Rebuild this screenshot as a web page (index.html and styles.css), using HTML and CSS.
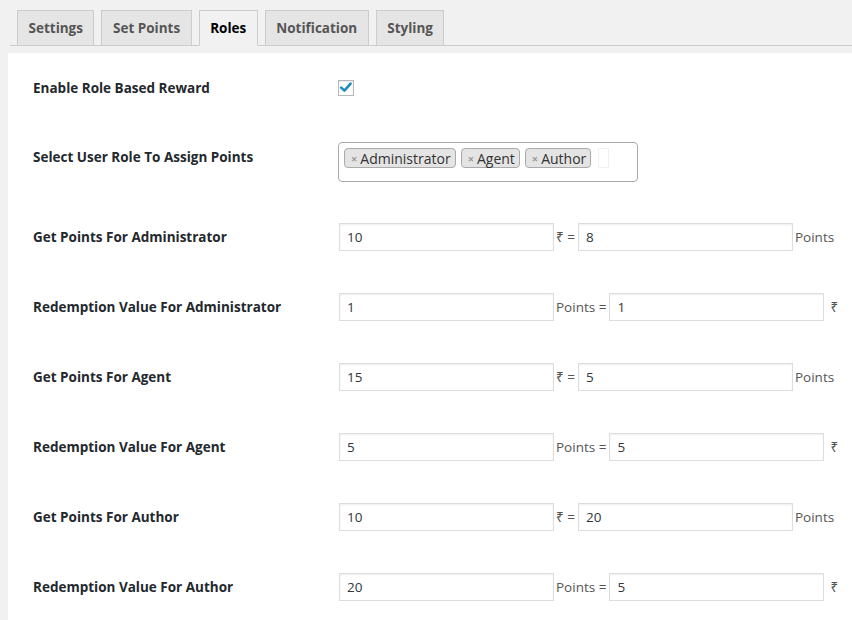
FILE: index.html
```html
<!DOCTYPE html>
<html>
<head>
<meta charset="utf-8">
<link rel="stylesheet" href="styles.css">
</head>
<body>
<nav class="tabs">
  <a class="tab">Settings</a>
  <a class="tab">Set Points</a>
  <a class="tab active">Roles</a>
  <a class="tab">Notification</a>
  <a class="tab">Styling</a>
</nav>
<main class="panel">
  <div class="row row-check">
    <div class="label">Enable Role Based Reward</div>
    <div class="field"><span class="checkbox"><svg viewBox="0 0 16 16" width="16" height="16"><path d="M3.2 7.6 L6.4 10.6 L12.6 3.6" fill="none" stroke="#1e8cbe" stroke-width="2.6" stroke-linecap="round" stroke-linejoin="round"/></svg></span></div>
  </div>
  <div class="row row-select">
    <div class="label">Select User Role To Assign Points</div>
    <div class="field">
      <div class="multi">
        <span class="chip"><span class="x">×</span>Administrator</span>
        <span class="chip"><span class="x">×</span>Agent</span>
        <span class="chip"><span class="x">×</span>Author</span>
        <span class="search"></span>
      </div>
    </div>
  </div>
  <div class="row">
    <div class="label">Get Points For Administrator</div>
    <div class="field"><span class="input">10</span><span class="sep">₹ =</span><span class="input">8</span><span class="tail">Points</span></div>
  </div>
  <div class="row">
    <div class="label">Redemption Value For Administrator</div>
    <div class="field"><span class="input">1</span><span class="sep">Points =</span><span class="input">1</span><span class="tail rs">₹</span></div>
  </div>
  <div class="row">
    <div class="label">Get Points For Agent</div>
    <div class="field"><span class="input">15</span><span class="sep">₹ =</span><span class="input">5</span><span class="tail">Points</span></div>
  </div>
  <div class="row">
    <div class="label">Redemption Value For Agent</div>
    <div class="field"><span class="input">5</span><span class="sep">Points =</span><span class="input">5</span><span class="tail rs">₹</span></div>
  </div>
  <div class="row">
    <div class="label">Get Points For Author</div>
    <div class="field"><span class="input">10</span><span class="sep">₹ =</span><span class="input">20</span><span class="tail">Points</span></div>
  </div>
  <div class="row">
    <div class="label">Redemption Value For Author</div>
    <div class="field"><span class="input">20</span><span class="sep">Points =</span><span class="input">5</span><span class="tail rs">₹</span></div>
  </div>
</main>
</body>
</html>
```
FILE: styles.css
```css
* { box-sizing: border-box; }
html, body { margin: 0; padding: 0; }
body {
  background: #f1f1f1;
  font-family: "Open Sans", "Noto Sans", sans-serif;
  font-size: 13px;
  color: #32373c;
  width: 852px;
  height: 620px;
  overflow: hidden;
}
.tabs {
  display: flex;
  margin: 0 0 0 10px;
  padding: 10px 0 0 7px;
  border-bottom: 1px solid #ccc;
  height: 46px;
  align-items: flex-end;
  gap: 7px;
}
.tab {
  display: block;
  height: 36px;
  margin-bottom: -1px;
  padding: 0 10.5px;
  line-height: 34px;
  font-size: 13.5px;
  font-weight: 700;
  color: #555;
  background: #e5e5e5;
  border: 1px solid #ccc;
}
.tab.active {
  background: #f1f1f1;
  color: #000;
  border-bottom-color: #f1f1f1;
}
.panel {
  margin: 7px 0 0 8px;
  background: #fff;
  height: 600px;
  padding-left: 25px;
}
.row {
  display: flex;
  align-items: center;
  height: 70px;
}
.label {
  width: 305px;
  flex: none;
  font-weight: 700;
  font-size: 13.5px;
  color: #23282d;
}
.field {
  display: flex;
  align-items: center;
  font-size: 13.5px;
  color: #555;
}
.checkbox {
  display: block;
  width: 16px;
  height: 16px;
  border: 1px solid #b4b9be;
  box-shadow: inset 0 1px 2px rgba(0,0,0,.1);
  background: #fff;
}
.checkbox svg { display: block; margin: -1px 0 0 -1px; }
.row-select {
  align-items: flex-start;
  height: 79px;
}
.row-select .label { padding-top: 25px; }
.row-select .field { padding-top: 19px; }
.multi {
  width: 300px;
  height: 40px;
  border: 1px solid #aaa;
  border-radius: 4px;
  display: flex;
  align-items: flex-start;
  padding: 5px 0 0 5px;
  gap: 5px;
}
.chip {
  display: flex;
  align-items: center;
  height: 20px;
  padding: 0 4px 0 6px;
  background: #e4e4e4;
  border: 1px solid #aaa;
  border-radius: 4px;
  color: #333;
  font-size: 14px;
}
.chip .x {
  color: #999;
  font-weight: 700;
  font-size: 11px;
  margin-right: 3px;
}
.search {
  width: 11px;
  height: 20px;
  margin-left: 2px;
  border: 1px solid #f0f0f0;
}
.input {
  display: block;
  width: 215px;
  height: 28px;
  border: 1px solid #ddd;
  box-shadow: inset 0 1px 2px rgba(0,0,0,.07);
  padding: 0 7px;
  line-height: 26px;
  color: #32373c;
  font-size: 13.5px;
}
.row .field > .input:first-child { margin-left: 1px; }
.sep { padding: 0 3px 0 2px; white-space: pre; }
.tail { padding-left: 2px; }
.tail.rs { padding-left: 6px; }
```
